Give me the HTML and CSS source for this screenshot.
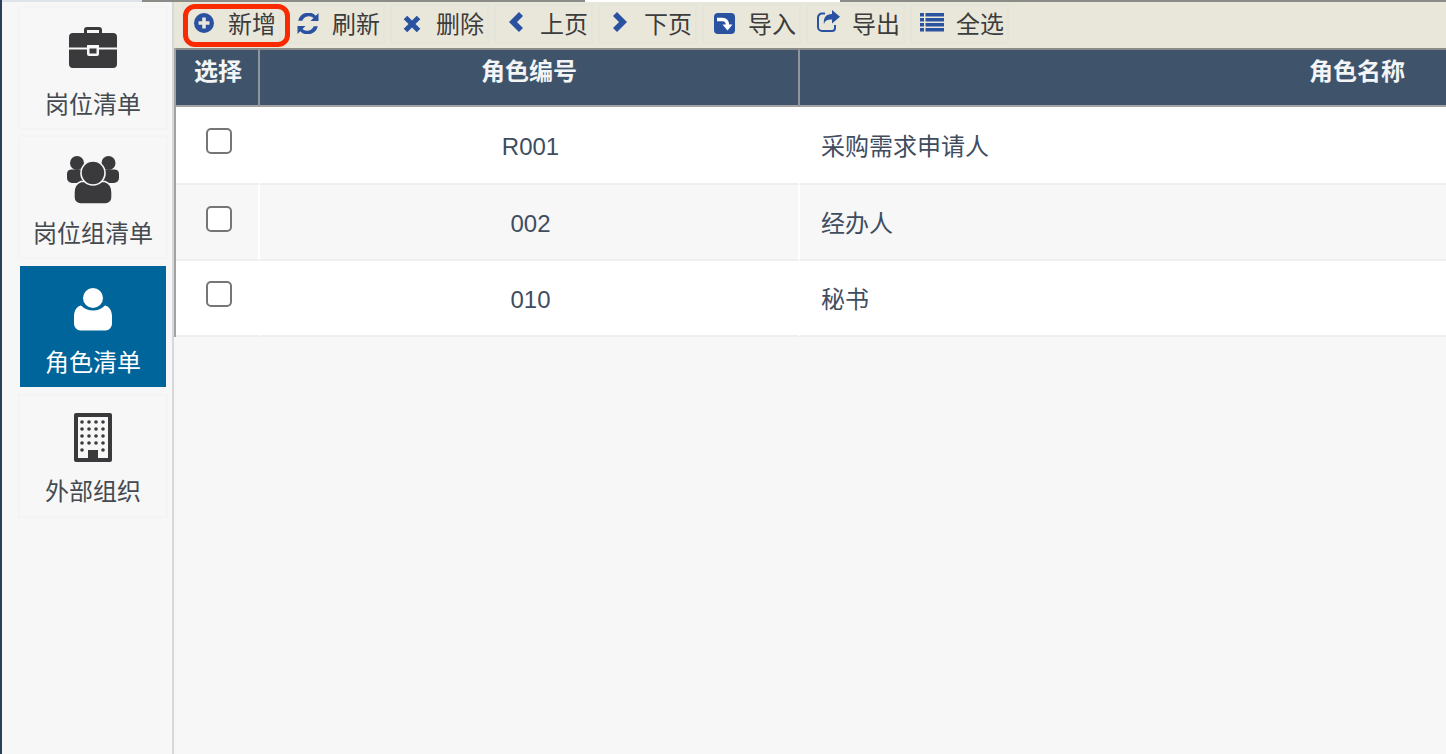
FILE: index.html
```html
<!DOCTYPE html>
<html lang="zh">
<head>
<meta charset="utf-8">
<title>角色清单</title>
<link rel="stylesheet" href="styles.css">
</head>
<body>
<div class="topline"><span class="seg seg-a"></span><span class="seg seg-b"></span><span class="seg seg-c"></span><span class="seg seg-d"></span></div>
<div class="app">
  <nav class="sidebar">
    <a class="nav-item first">
      <svg class="nav-icon" width="48" height="42" viewBox="0 0 48 42"><path fill="currentColor" fill-rule="evenodd" d="M15 6V3a3 3 0 0 1 3-3h12a3 3 0 0 1 3 3v3h11a4 4 0 0 1 4 4v10.500H30V18H18v2.500H0V10a4 4 0 0 1 4-4zM18 6h12V3H18z"/><path fill="currentColor" d="M0 22.500h18V27a2 2 0 0 0 2 2h8a2 2 0 0 0 2-2v-4.500h18V37a4 4 0 0 1-4 4H4a4 4 0 0 1-4-4z"/><rect fill="currentColor" x="20.500" y="21.500" width="7" height="5"/></svg>
      <span>岗位清单</span>
    </a>
    <a class="nav-item">
      <svg class="nav-icon" width="52" height="48" viewBox="0 0 52 48"><g fill="currentColor"><circle cx="10" cy="7" r="7"/><circle cx="41.500" cy="7" r="7"/><path d="M4 13.500h12a6 6 0 0 1 6 6V27H5a5 5 0 0 1-5-5v-4a4.500 4.500 0 0 1 4-4.500z"/><path d="M48 13.500H36a6 6 0 0 0-6 6V27h17a5 5 0 0 0 5-5v-4a4.500 4.500 0 0 0-4-4.500z"/><path d="M14 25.500h24c4.500 1.500 7 6 7 11v5a6.500 6.500 0 0 1-6.500 6.500h-25A6.500 6.500 0 0 1 7 41.500v-5c0-5 2.500-9.500 7-11z" stroke="#f7f7f7" stroke-width="1.400"/><circle cx="26" cy="17" r="12" stroke="#f7f7f7" stroke-width="1.600"/></g></svg>
      <span>岗位组清单</span>
    </a>
    <a class="nav-item active">
      <svg class="nav-icon" width="38" height="43" viewBox="0 0 38 43"><g fill="currentColor"><circle cx="19" cy="10" r="10"/><path d="M7 17.500a17 17 0 0 0 24 0c4.500 1 7 5.500 7 11V36a6.500 6.500 0 0 1-6.500 6.500h-25A6.500 6.500 0 0 1 0 36v-7.500c0-5.500 2.500-10 7-11z"/></g></svg>
      <span>角色清单</span>
    </a>
    <a class="nav-item last">
      <svg class="nav-icon" width="38" height="49" viewBox="0 0 38 49"><path fill="currentColor" fill-rule="evenodd" d="M2 0h34a2 2 0 0 1 2 2v45a2 2 0 0 1-2 2H2a2 2 0 0 1-2-2V2a2 2 0 0 1 2-2zM4 4v41h10v-8h10v8h10V4z"/><g fill="currentColor"><circle cx="8" cy="9" r="1.800"/><circle cx="15" cy="9" r="1.800"/><circle cx="22" cy="9" r="1.800"/><circle cx="29" cy="9" r="1.800"/><circle cx="8" cy="16" r="1.800"/><circle cx="15" cy="16" r="1.800"/><circle cx="22" cy="16" r="1.800"/><circle cx="29" cy="16" r="1.800"/><circle cx="8" cy="23" r="1.800"/><circle cx="15" cy="23" r="1.800"/><circle cx="22" cy="23" r="1.800"/><circle cx="29" cy="23" r="1.800"/><circle cx="8" cy="30" r="1.800"/><circle cx="15" cy="30" r="1.800"/><circle cx="22" cy="30" r="1.800"/><circle cx="29" cy="30" r="1.800"/><circle cx="8" cy="37" r="1.800"/><circle cx="29" cy="37" r="1.800"/></g></svg>
      <span>外部组织</span>
    </a>
  </nav>
  <main class="main">
    <div class="toolbar">
      <button class="tool"><span class="tool-icon"><svg width="20" height="20" viewBox="0 0 20 20"><path fill="currentColor" fill-rule="evenodd" d="M10 0a10 10 0 1 1 0 20a10 10 0 0 1 0-20zM8.200 4.500v3.700H4.500v3.600h3.700v3.700h3.600v-3.700h3.700V8.200h-3.700V4.500z"/></svg></span><span class="tool-label">新增</span></button>
      <button class="tool"><span class="tool-icon"><svg width="22" height="21" viewBox="0 0 22 21"><path fill="currentColor" d="M21.500 0v8h-8l3-3a7 7 0 0 0-11.200 2.800H1.200A10.500 10.500 0 0 1 18.800 2.700zM.5 21v-8h8l-3 3a7 7 0 0 0 11.200-2.800h4.100A10.500 10.500 0 0 1 3.200 18.300z"/></svg></span><span class="tool-label">刷新</span></button>
      <button class="tool"><span class="tool-icon icon-low"><svg width="18" height="18" viewBox="0 0 18 18"><path fill="currentColor" d="M4.200.7 9 5.500 13.800.7l3.500 3.500L12.500 9l4.800 4.800-3.500 3.500L9 12.500l-4.800 4.800-3.500-3.500L5.500 9 .7 4.200z"/></svg></span><span class="tool-label">删除</span></button>
      <button class="tool"><span class="tool-icon icon-high"><svg width="14" height="20" viewBox="0 0 14 20"><path fill="currentColor" d="M10 0l4 4-6 6 6 6-4 4L0 10z"/></svg></span><span class="tool-label">上页</span></button>
      <button class="tool"><span class="tool-icon icon-high"><svg width="14" height="20" viewBox="0 0 14 20"><path fill="currentColor" d="M4 0L0 4l6 6-6 6 4 4 10-10z"/></svg></span><span class="tool-label">下页</span></button>
      <button class="tool"><span class="tool-icon"><svg width="21" height="21" viewBox="0 0 21 21"><rect fill="currentColor" width="21" height="21" rx="4"/><path fill="none" stroke="#fff" stroke-width="3.400" d="M3 6.500h5.500c3 0 5 2 5 5.500"/><path fill="#fff" d="M8.500 11.500h10l-5 6z"/></svg></span><span class="tool-label">导入</span></button>
      <button class="tool"><span class="tool-icon icon-top"><svg width="23" height="22" viewBox="0 0 23 22"><path fill="currentColor" d="M15 0l8 6.800L15 13.500V9.500c-4.500 0-7.500 1-8 5C6 8 9 4 15 4z"/><path fill="none" stroke="currentColor" stroke-width="2" d="M8 3.500H5a4 4 0 0 0-4 4V17a4 4 0 0 0 4 4h10a3 3 0 0 0 3-3v-3"/></svg></span><span class="tool-label">导出</span></button>
      <button class="tool"><span class="tool-icon icon-high"><svg width="24" height="19" viewBox="0 0 24 19"><path fill="currentColor" d="M0 0h4v3.400H0zM5.500 0H24v3.400H5.500zM0 5h4v3.400H0zM5.500 5H24v3.400H5.500zM0 10h4v3.400H0zM5.500 10H24v3.400H5.500zM0 15h4v3.400H0zM5.500 15H24v3.400H5.500z"/></svg></span><span class="tool-label">全选</span></button>
      <span class="highlight"></span>
    </div>
    <div class="table-wrap">
      <table class="grid">
        <colgroup><col class="col-check"><col class="col-code"><col class="col-name"></colgroup>
        <thead>
          <tr><th class="head-check">选择</th><th>角色编号</th><th>角色名称</th></tr>
        </thead>
        <tbody>
          <tr class="row-first"><td class="cell-check"><span class="check"></span></td><td class="cell-code">R001</td><td>采购需求申请人</td></tr>
          <tr class="alt"><td class="cell-check"><span class="check"></span></td><td class="cell-code">002</td><td>经办人</td></tr>
          <tr class="row-last"><td class="cell-check"><span class="check"></span></td><td class="cell-code">010</td><td>秘书</td></tr>
        </tbody>
      </table>
    </div>
  </main>
</div>
</body>
</html>
```

FILE: styles.css
```css
* { box-sizing: border-box; }
html, body { height: 100%; }
body {
  margin: 0;
  width: 1446px;
  height: 754px;
  overflow: hidden;
  display: flex;
  flex-direction: column;
  background: #f7f7f7;
  font-family: "Liberation Sans", "Noto Sans CJK SC", sans-serif;
  font-size: 24px;
  color: #3f4d5f;
  border-left: 2px solid #2a3f5c;
}
.topline { display: flex; height: 2px; flex: none; }
.seg { display: block; height: 2px; }
.seg-a { width: 140px; background: #dfe3ea; }
.seg-b { width: 443px; background: #8b8b88; }
.seg-c { width: 255px; background: #ffffff; }
.seg-d { flex: 1; background: #8b8b88; }
.app { display: flex; flex: 1; min-height: 0; }

.sidebar {
  width: 172px;
  flex: none;
  border-right: 2px solid #d8d8d8;
  padding: 4px 4px 0 16px;
  display: flex;
  flex-direction: column;
  gap: 5px;
  background: #f7f7f7;
}
.nav-item {
  height: 124px;
  border: 2px solid #f4f4f4;
  display: flex;
  flex-direction: column;
  align-items: center;
  color: #3a3a3d;
  font-family: "Noto Sans CJK SC", sans-serif;
  line-height: 34px;
  padding-top: 19px;
}
.nav-item span { margin-top: 17px; color: #444a50; }
.nav-item:nth-child(2) { padding-top: 19px; }
.nav-item:nth-child(2) span { margin-top: 11px; }
.nav-item.active {
  background: #00659b;
  border: 0;
  height: 121px;
  margin: 2px 2px;
  padding-top: 22px;
  color: #fff;
}
.nav-item.active span { color: #fff; margin-top: 13px; }
.nav-item.last { padding-top: 17px; }
.nav-item.last span { margin-top: 11px; }
.nav-icon { flex: none; display: block; }

.main { flex: 1; min-width: 0; display: flex; flex-direction: column; }
.toolbar {
  position: relative;
  height: 46px;
  flex: none;
  background: #e9e7da;
  display: flex;
  align-items: flex-start;
  gap: 5px;
  padding: 2px 0 0 8px;
}
.tool {
  width: 99px;
  height: 40px;
  flex: none;
  border: 2px solid #e5e4da;
  background: #e9e7da;
  padding: 0;
  display: flex;
  align-items: center;
  font-family: "Noto Sans CJK SC", sans-serif;
  font-size: 24px;
  color: #3c3c3c;
  line-height: 36px;
}
.tool-label { display: block; padding-bottom: 2px; }
.tool-icon {
  width: 40px;
  height: 36px;
  margin-right: 4px;
  flex: none;
  display: flex;
  align-items: center;
  justify-content: center;
  color: #2a52a0;
  padding-bottom: 2px;
}
.tool-icon.icon-low { padding-bottom: 0; }
.tool-icon.icon-high { padding-bottom: 4px; }
.tool-icon.icon-top { padding-bottom: 7px; }
.tool-icon svg { display: block; }
.highlight {
  position: absolute;
  left: 9px;
  top: 2px;
  width: 107px;
  height: 43px;
  border: 5px solid #fa2a00;
  border-radius: 12px;
}

.table-wrap { flex: 1; min-height: 0; overflow: hidden; }
.grid {
  table-layout: fixed;
  width: 1738px;
  border-collapse: separate;
  border-spacing: 0;
  border-left: 2px solid #a3a3a3;
}
.col-check { width: 84px; }
.col-code { width: 540px; }
.col-name { width: 1114px; }
.grid th {
  height: 59px;
  background: #3f546b;
  color: #f2f4f6;
  font-family: "Noto Sans CJK SC", sans-serif;
  font-weight: 700;
  font-size: 24px;
  line-height: 34px;
  padding: 0 0 16px;
  border-top: 2px solid #8a8a88;
  border-bottom: 2px solid #a3a3a3;
  border-right: 2px solid #8f959b;
  text-align: center;
}
.grid th.head-check { padding-left: 2px; }
.grid th:last-child { border-right: 0; }
.grid td {
  height: 76px;
  background: #fff;
  border-bottom: 2px solid #efefef;
  border-right: 2px solid #fff;
  padding: 0 0 0 21px;
  color: #3f4d5f;
  font-family: "Noto Sans CJK SC", sans-serif;
  line-height: 34px;
}
.grid tr.row-first td { height: 78px; }
.grid tr.alt td { background: #f7f7f7; }
.grid td.cell-code { text-align: center; font-family: "Liberation Sans", sans-serif; padding: 4px 0 0 3px; }
.grid td.cell-check { padding: 0; text-align: center; vertical-align: top; }
.check {
  display: block;
  width: 26px;
  height: 26px;
  margin: 21px 0 0 30px;
  border: 2px solid #767676;
  border-radius: 5px;
  background: #fff;
}
.grid tr.row-last .check { margin-top: 20px; }
```
